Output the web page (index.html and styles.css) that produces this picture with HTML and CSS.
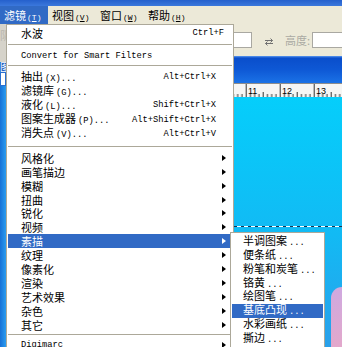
FILE: index.html
```html
<!DOCTYPE html>
<html lang="zh-CN">

<head>
    <meta charset="UTF-8" />
    <title>滤镜</title>
    <link rel="stylesheet" href="styles.css">
</head>

<body>
    <div class="titlebar"></div>

    <div class="menubar">
        <span class="menubar-item active">滤镜<span class="key">(<u>T</u>)</span></span>
        <span class="menubar-item">视图<span class="key">(<u>V</u>)</span></span>
        <span class="menubar-item">窗口<span class="key">(<u>W</u>)</span></span>
        <span class="menubar-item">帮助<span class="key">(<u>H</u>)</span></span>
    </div>

    <div class="main">
        <div class="dock">
            <div class="dock-gray">阴</div>
            <div class="dock-tab">图</div>
            <div class="dock-box"></div>
            <div class="dock-blue"></div>
        </div>

        <div class="workspace">
            <div class="options">
                <span class="field field-w"></span>
                <svg class="swap" viewBox="0 0 10 8">
                    <path d="M1 2.5H8.5M6.5 0.5L8.5 2.5L6.5 4.5" />
                    <path d="M9 5.5H1.5M3.5 3.5L1.5 5.5L3.5 7.5" />
                </svg>
                <span class="label">高度:</span>
                <span class="field field-h"></span>
            </div>

            <div class="docbar"></div>

            <div class="ruler">
                <svg width="336" height="13">
                    <defs>
                        <pattern id="ticks" x="1.7" y="0" width="34" height="13" patternUnits="userSpaceOnUse">
                            <path d="M0.5 0V13M4.75 10V13M9 10V13M13.25 10V13M17.5 8V13M21.75 10V13M26 10V13M30.25 10V13" />
                        </pattern>
                    </defs>
                    <rect width="336" height="13" fill="url(#ticks)" />
                    <text x="4" y="9.5">4</text>
                    <text x="38" y="9.5">5</text>
                    <text x="72" y="9.5">6</text>
                    <text x="106" y="9.5">7</text>
                    <text x="140" y="9.5">8</text>
                    <text x="174" y="9.5">9</text>
                    <text x="208" y="9.5">10</text>
                    <text x="242" y="9.5">11</text>
                    <text x="276" y="9.5">12</text>
                    <text x="310" y="9.5">13</text>
                </svg>
            </div>

            <div class="canvas">
                <div class="selection"></div>
                <div class="blob"></div>
            </div>
        </div>
    </div>

    <!-- 滤镜 菜单 -->
    <div class="menu">
        <div class="item"><span>水波</span><span class="shortcut first">Ctrl+F</span></div>
        <div class="sep sep-1"></div>
        <div class="item"><span class="ascii">Convert for Smart Filters</span></div>
        <div class="sep sep-2"></div>
        <div class="upper">
            <div class="item"><span>抽出<span class="dots">(X)...</span></span><span class="shortcut">Alt+Ctrl+X</span></div>
            <div class="item"><span>滤镜库<span class="dots">(G)...</span></span></div>
            <div class="item"><span>液化<span class="dots">(L)...</span></span><span class="shortcut">Shift+Ctrl+X</span></div>
            <div class="item"><span>图案生成器<span class="dots">(P)...</span></span><span class="shortcut">Alt+Shift+Ctrl+X</span></div>
            <div class="item"><span>消失点<span class="dots">(V)...</span></span><span class="shortcut">Alt+Ctrl+V</span></div>
        </div>
        <div class="sep sep-3"></div>
        <div class="lower">
            <div class="item"><span>风格化</span><i class="arrow"></i></div>
            <div class="item"><span>画笔描边</span><i class="arrow"></i></div>
            <div class="item"><span>模糊</span><i class="arrow"></i></div>
            <div class="item"><span>扭曲</span><i class="arrow"></i></div>
            <div class="item"><span>锐化</span><i class="arrow"></i></div>
            <div class="item"><span>视频</span><i class="arrow"></i></div>
            <div class="item active"><span>素描</span><i class="arrow"></i></div>
            <div class="item"><span>纹理</span><i class="arrow"></i></div>
            <div class="item"><span>像素化</span><i class="arrow"></i></div>
            <div class="item"><span>渲染</span><i class="arrow"></i></div>
            <div class="item"><span>艺术效果</span><i class="arrow"></i></div>
            <div class="item"><span>杂色</span><i class="arrow"></i></div>
            <div class="item"><span>其它</span><i class="arrow"></i></div>
        </div>
        <div class="sep sep-4"></div>
        <div class="item"><span class="ascii">Digimarc</span><i class="arrow"></i></div>
    </div>

    <!-- 素描 子菜单 -->
    <div class="submenu">
        <div class="item"><span>半调图案<span class="dots">...</span></span></div>
        <div class="item"><span>便条纸<span class="dots">...</span></span></div>
        <div class="item"><span>粉笔和炭笔<span class="dots">...</span></span></div>
        <div class="item"><span>铬黄<span class="dots">...</span></span></div>
        <div class="item"><span>绘图笔<span class="dots">...</span></span></div>
        <div class="item active"><span>基底凸现<span class="dots">...</span></span></div>
        <div class="item"><span>水彩画纸<span class="dots">...</span></span></div>
        <div class="item"><span>撕边<span class="dots">...</span></span></div>
    </div>
</body>

</html>
```

FILE: styles.css
```css
* {
    box-sizing: border-box;
    margin: 0;
    padding: 0;
}

body {
    width: 342px;
    height: 347px;
    overflow: hidden;
    position: relative;
    background: #ece9d8;
    font-family: "Noto Sans CJK SC", sans-serif;
    font-size: 11px;
    color: #000;
}

.titlebar {
    height: 6px;
    background: linear-gradient(#2560cc, #3b78dc);
}

.menubar {
    height: 18px;
    display: flex;
    background: #ece9d8;
}

.menubar-item {
    width: 48px;
    padding-left: 4px;
    line-height: 18px;
    white-space: nowrap;
}

.menubar-item.active {
    background: #316ac5;
    color: #fff;
}

.key {
    font-family: "Liberation Mono", monospace;
    font-size: 8px;
    margin-left: 1px;
}

.main {
    display: flex;
    height: 323px;
}

.dock {
    width: 6px;
    display: flex;
    flex-direction: column;
    overflow: hidden;
}

.dock-gray {
    height: 38px;
    padding-top: 4px;
    background: #d6d3ca;
    color: #b9b6ad;
    line-height: 14px;
}

.dock-tab {
    height: 10px;
    background: #2160c4;
    color: #fff;
    font-size: 10px;
    line-height: 10px;
}

.dock-box {
    height: 14px;
    background: #fff;
    border: 1px solid #2a6fd0;
}

.dock-blue {
    flex: 1;
    background: linear-gradient(90deg, #1670d6, #2a9cf0);
}

.workspace {
    flex: 1;
    min-width: 0;
    display: flex;
    flex-direction: column;
}

.options {
    height: 32px;
    display: flex;
    align-items: center;
    padding-left: 196px;
    white-space: nowrap;
    overflow: hidden;
}

.field {
    flex: none;
    height: 16px;
    background: #fff;
    border: 1px solid #a9a8a2;
}

.field-w {
    width: 50px;
}

.field-h {
    width: 40px;
    margin-left: 2px;
}

.swap {
    flex: none;
    width: 10px;
    height: 8px;
    margin-left: 12px;
    margin-top: 3px;
    fill: none;
    stroke: #707070;
    stroke-width: 1;
}

.label {
    margin-left: 11px;
    color: #aaa9a3;
}

.docbar {
    height: 27px;
    background: linear-gradient(#5d9af0 0, #0a4ecb 2px, #0e58d5 50%, #1b72e6 100%);
}

.ruler {
    height: 14px;
    background: #f6f6f4;
    border-top: 1px solid #8c8c8c;
}

.ruler svg {
    display: block;
}

.ruler path {
    stroke: #333;
    stroke-width: 1;
}

.ruler text {
    font-family: "Liberation Sans", sans-serif;
    font-size: 9px;
    fill: #000;
}

.canvas {
    flex: 1;
    position: relative;
    overflow: hidden;
    background: linear-gradient(#05cefb, #12baf4 55%, #2aa0ea);
}

.selection {
    margin-top: 129px;
    height: 1px;
    background: repeating-linear-gradient(90deg, #fff 0 4px, #1b3550 4px 7px);
}

.blob {
    position: absolute;
    left: 325px;
    top: 190px;
    width: 11px;
    height: 70px;
    border-radius: 11px 0 0 0;
    background: linear-gradient(#cfa9e0, #e6a8c8);
}

/* menus */
.menu {
    position: absolute;
    left: 6px;
    top: 24px;
    width: 228px;
    height: 323px;
    overflow: hidden;
    padding: 1px;
    background: #fff;
    border: 1px solid #aca899;
    border-bottom: 0;
}

.item {
    display: flex;
    align-items: center;
    height: 14px;
    line-height: 14px;
    padding-left: 13px;
    white-space: nowrap;
}

.upper .item {
    height: 14.2px;
}

.lower .item {
    height: 13.9px;
}

.item.active {
    background: #316ac5;
    color: #fff;
}

.ascii,
.dots,
.shortcut {
    font-family: "Liberation Mono", monospace;
    font-size: 8.75px;
}

.dots {
    margin-left: 2px;
}

.shortcut {
    margin-left: auto;
    padding-right: 16px;
}

.shortcut.first {
    padding-right: 8px;
}

.arrow {
    margin-left: auto;
    margin-right: 6px;
    width: 0;
    height: 0;
    border-left: 4px solid #000;
    border-top: 3.5px solid transparent;
    border-bottom: 3.5px solid transparent;
}

.item.active .arrow {
    border-left-color: #fff;
}

.sep {
    border-top: 1px solid #aca899;
}

.sep-1 {
    margin: 4px 0 4px;
}

.sep-2 {
    margin: 2px 0 4px;
}

.sep-3 {
    margin: 5px 0 4px;
}

.sep-4 {
    margin: 2px 0 3.3px;
}

.submenu {
    position: absolute;
    left: 230px;
    top: 232.4px;
    width: 95px;
    height: 114.6px;
    overflow: hidden;
    padding: 1px;
    background: #fff;
    border: 1px solid #aca899;
    border-bottom: 0;
}

.submenu .item {
    height: 13.9px;
    padding-left: 11px;
}
```
